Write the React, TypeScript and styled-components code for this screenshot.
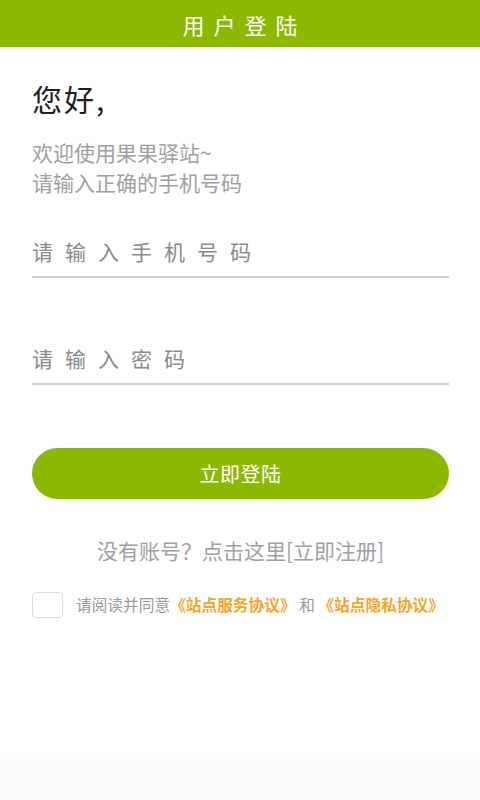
import React, { useState } from "react";
import styled, { createGlobalStyle } from "styled-components";

const GlobalStyle = createGlobalStyle`
  html, body {
    margin: 0;
    padding: 0;
    background: #ffffff;
    overflow-x: hidden;
  }
  body {
    font-family: "Noto Sans CJK SC", "Noto Sans", sans-serif;
  }
  * { box-sizing: border-box; }
`;

const Page = styled.div`
  width: 480px;
  min-height: 800px;
  display: flex;
  flex-direction: column;
  background: #ffffff;
  overflow: hidden;
`;

const Header = styled.header`
  height: 47px;
  background: #8cb900;
  display: flex;
  align-items: center;
  justify-content: center;
`;

const HeaderTitle = styled.h1`
  margin: 0 0 0 9px;
  font-size: 22px;
  font-weight: 400;
  color: #ffffff;
  letter-spacing: 9px;
  line-height: 1;
`;

const Main = styled.main`
  flex: 1;
  display: flex;
  flex-direction: column;
  padding: 31px 31px 0 32px;
`;

const Greeting = styled.h2`
  margin: 0;
  font-size: 30px;
  font-weight: 400;
  line-height: 40px;
  color: #1e1e1e;
  letter-spacing: 2px;
`;

const Intro = styled.div`
  margin-top: 19px;
  display: flex;
  flex-direction: column;
`;

const IntroLine = styled.p`
  margin: 0;
  font-size: 21px;
  line-height: 30px;
  color: #a0a0a0;
`;

const Field = styled.label<{ $gap: number }>`
  display: flex;
  align-items: center;
  height: 49px;
  padding-bottom: 4px;
  margin-top: ${(p) => p.$gap}px;
  border-bottom: 2px solid #cfcfcf;
`;

const Input = styled.input`
  flex: 1;
  min-width: 0;
  width: 100%;
  border: none;
  outline: none;
  background: transparent;
  padding: 0;
  font-family: "Noto Sans CJK SC", "Noto Sans", sans-serif;
  font-size: 21px;
  letter-spacing: 12px;
  color: #333;
  &::placeholder {
    color: #8a8a8a;
  }
`;

const LoginButton = styled.button`
  margin-top: 63px;
  height: 51px;
  width: 100%;
  border: none;
  border-radius: 26px;
  background: #8cb900;
  color: #ffffff;
  font-family: "Noto Sans CJK SC", "Noto Sans", sans-serif;
  font-size: 20px;
  letter-spacing: 0.5px;
  cursor: pointer;
`;

const RegisterText = styled.p`
  margin: 36px 0 0;
  text-align: center;
  font-size: 21px;
  line-height: 30px;
  color: #a0a0a0;
`;

const AgreeRow = styled.div`
  margin-top: 27px;
  display: flex;
  align-items: center;
  gap: 13px;
`;

const CheckBox = styled.span<{ $checked: boolean }>`
  width: 31px;
  height: 26px;
  flex: none;
  border: 1.5px solid #dcdcdc;
  border-radius: 4px;
  background: ${(p) => (p.$checked ? "#8cb900" : "#ffffff")};
  cursor: pointer;
`;

const AgreeText = styled.p`
  margin: 0;
  font-size: 15.7px;
  line-height: 20px;
  color: #9a9a9a;
  white-space: nowrap;
`;

const Link = styled.span`
  color: #f3a52a;
  font-weight: 700;
`;

const Footer = styled.div`
  height: 41px;
  background: #fbfbfb;
`;

export default function App() {
  const [checked, setChecked] = useState(false);
  return (
    <Page>
      <GlobalStyle />
      <Header>
        <HeaderTitle>用户登陆</HeaderTitle>
      </Header>
      <Main>
        <Greeting>您好,</Greeting>
        <Intro>
          <IntroLine>欢迎使用果果驿站~</IntroLine>
          <IntroLine>请输入正确的手机号码</IntroLine>
        </Intro>
        <Field $gap={32}>
          <Input type="tel" placeholder="请输入手机号码" />
        </Field>
        <Field $gap={58}>
          <Input type="password" placeholder="请输入密码" />
        </Field>
        <LoginButton>立即登陆</LoginButton>
        <RegisterText>没有账号？点击这里[立即注册]</RegisterText>
        <AgreeRow>
          <CheckBox $checked={checked} onClick={() => setChecked(!checked)} />
          <AgreeText>
            请阅读并同意<Link>《站点服务协议》</Link> 和 <Link>《站点隐私协议》</Link>
          </AgreeText>
        </AgreeRow>
      </Main>
      <Footer />
    </Page>
  );
}
